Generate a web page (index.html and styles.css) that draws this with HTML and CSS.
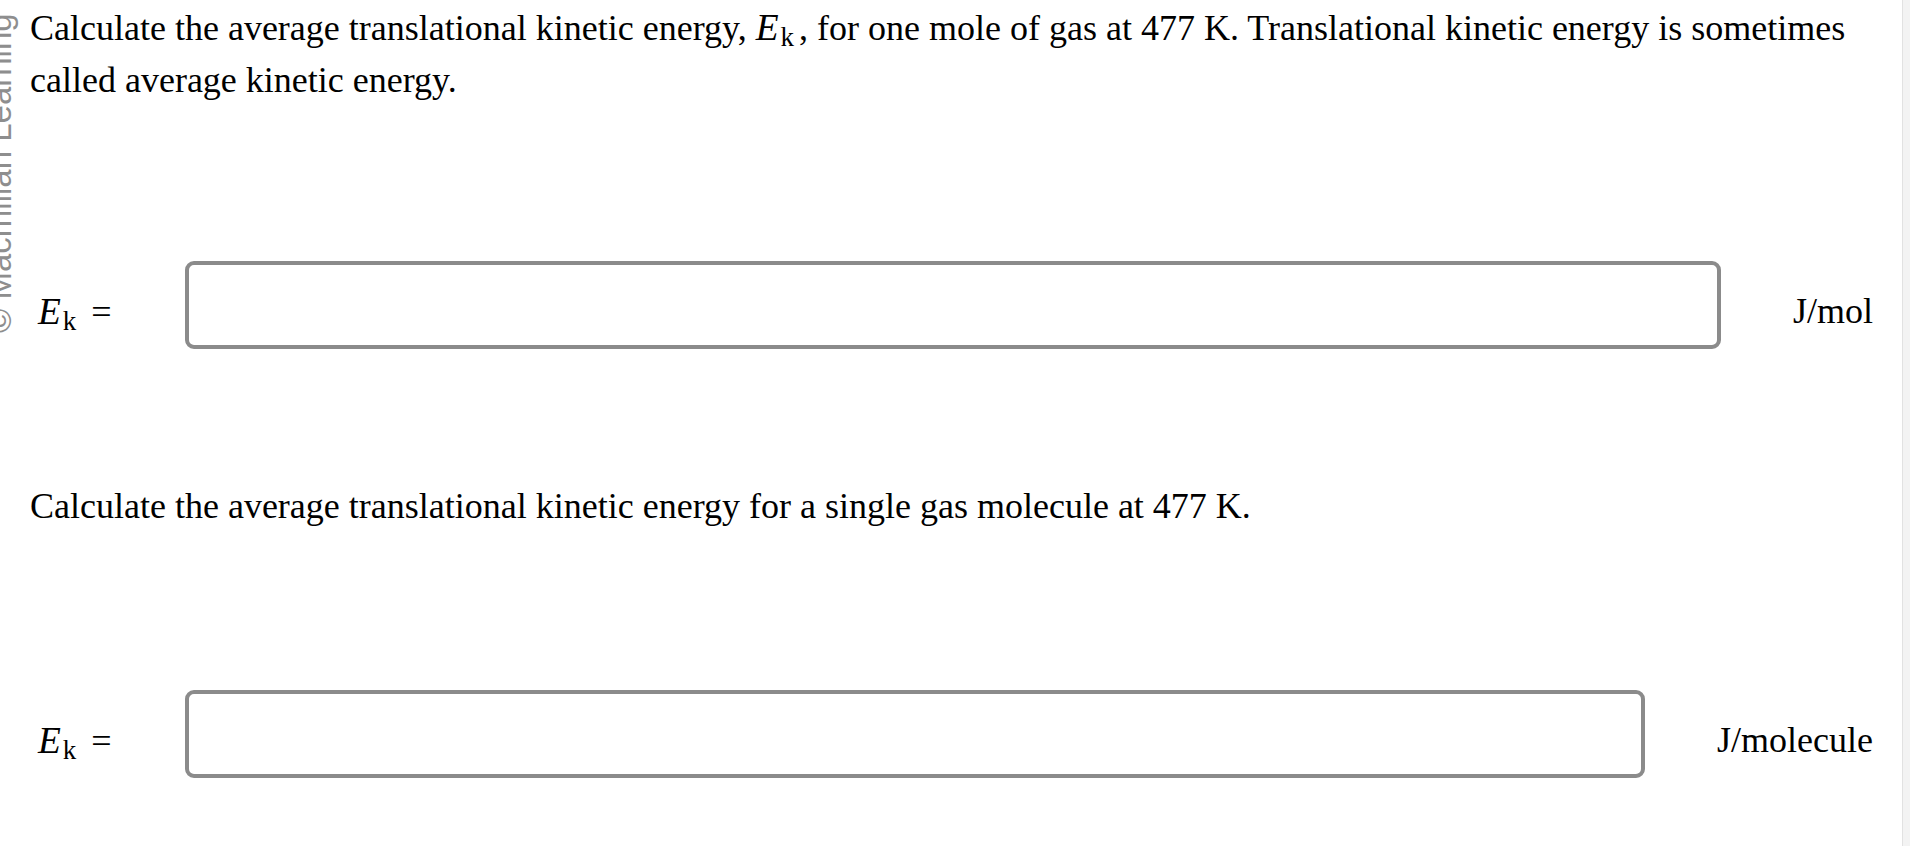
FILE: index.html
```html
<!DOCTYPE html>
<html lang="en">
<head>
<meta charset="utf-8">
<title>Average translational kinetic energy</title>
<link rel="stylesheet" href="styles.css">
</head>
<body>
<div class="page">
  <div class="watermark">© Macmillan Learning</div>
  <main class="content">
    <p class="question q1">Calculate the average translational kinetic energy, <span class="math inline-math"><i>E</i><sub>k</sub></span>, for one mole of gas at 477&nbsp;K. Translational kinetic energy is sometimes called average kinetic energy.</p>
    <div class="answer-row row1">
      <label class="label"><span class="math"><i>E</i><sub>k</sub></span><span class="eq">=</span></label>
      <input class="field" type="text" aria-label="Ek in J/mol">
      <span class="unit">J/mol</span>
    </div>
    <p class="question q2">Calculate the average translational kinetic energy for a single gas molecule at 477&nbsp;K.</p>
    <div class="answer-row row2">
      <label class="label"><span class="math"><i>E</i><sub>k</sub></span><span class="eq">=</span></label>
      <input class="field" type="text" aria-label="Ek in J/molecule">
      <span class="unit">J/molecule</span>
    </div>
  </main>
  <div class="scrollbar"></div>
</div>
</body>
</html>
```
FILE: styles.css
```css
html, body {
  margin: 0;
  padding: 0;
  background: #ffffff;
}

.page {
  position: relative;
  display: flex;
  height: 846px;
  overflow: hidden;
  font-family: "Liberation Serif", "Times New Roman", serif;
  font-size: 36px;
  color: #000000;
}

.watermark {
  position: absolute;
  left: -17px;
  top: 333px;
  transform-origin: 0 0;
  transform: rotate(-90deg);
  font-family: "Liberation Sans", Arial, sans-serif;
  font-size: 33px;
  line-height: 1;
  color: #8e8e8e;
  white-space: nowrap;
}

.content {
  flex: 1;
  min-width: 0;
  padding: 2px 29px 0 30px;
}

.question {
  margin: 0;
  line-height: 52px;
}

.q2 {
  margin-top: 131px;
}

.math {
  font-size: 1.04em;
  white-space: nowrap;
}

.inline-math {
  margin-right: 5px;
}

.math i {
  font-style: italic;
}

.math sub {
  font-size: 0.72em;
  vertical-align: -0.24em;
  line-height: 0;
  margin-left: 2px;
}

.answer-row {
  display: flex;
  align-items: center;
  height: 88px;
}

.row1 {
  margin-top: 155px;
}

.row2 {
  margin-top: 158px;
}

.label {
  flex: none;
  width: 155px;
  box-sizing: border-box;
  padding-left: 8px;
  padding-top: 12px;
  white-space: nowrap;
}

.eq {
  display: inline-block;
  margin-left: 15px;
}

.field {
  flex: 1;
  min-width: 0;
  height: 88px;
  box-sizing: border-box;
  border: 4px solid #8b8b8b;
  border-radius: 9px;
  background: #ffffff;
  font: inherit;
  padding: 0 12px;
  outline: none;
}

.unit {
  flex: none;
  margin-left: 72px;
  padding-top: 12px;
  white-space: nowrap;
}

.scrollbar {
  flex: none;
  width: 7px;
  background: #f3f3f3;
  border-left: 1px solid #e2e2e2;
}
```
